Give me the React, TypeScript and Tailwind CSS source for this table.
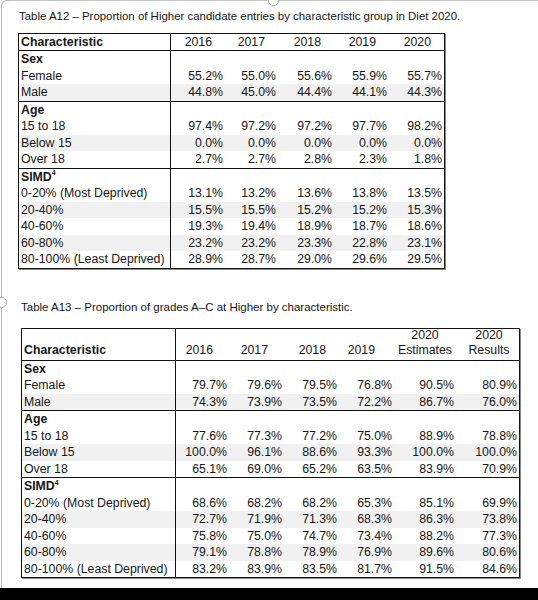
import React from 'react';

type Row = { label: string; values: string[]; head?: boolean; sup?: string };
type Section = Row[];

const font = "font-['Liberation_Sans',Arial,sans-serif]";

const a12: Section[] = [
  [
    { label: 'Sex', values: [], head: true },
    { label: 'Female', values: ['55.2%', '55.0%', '55.6%', '55.9%', '55.7%'] },
    { label: 'Male', values: ['44.8%', '45.0%', '44.4%', '44.1%', '44.3%'] },
  ],
  [
    { label: 'Age', values: [], head: true },
    { label: '15 to 18', values: ['97.4%', '97.2%', '97.2%', '97.7%', '98.2%'] },
    { label: 'Below 15', values: ['0.0%', '0.0%', '0.0%', '0.0%', '0.0%'] },
    { label: 'Over 18', values: ['2.7%', '2.7%', '2.8%', '2.3%', '1.8%'] },
  ],
  [
    { label: 'SIMD', values: [], head: true, sup: '4' },
    { label: '0-20% (Most Deprived)', values: ['13.1%', '13.2%', '13.6%', '13.8%', '13.5%'] },
    { label: '20-40%', values: ['15.5%', '15.5%', '15.2%', '15.2%', '15.3%'] },
    { label: '40-60%', values: ['19.3%', '19.4%', '18.9%', '18.7%', '18.6%'] },
    { label: '60-80%', values: ['23.2%', '23.2%', '23.3%', '22.8%', '23.1%'] },
    { label: '80-100% (Least Deprived)', values: ['28.9%', '28.7%', '29.0%', '29.6%', '29.5%'] },
  ],
];

const a13: Section[] = [
  [
    { label: 'Sex', values: [], head: true },
    { label: 'Female', values: ['79.7%', '79.6%', '79.5%', '76.8%', '90.5%', '80.9%'] },
    { label: 'Male', values: ['74.3%', '73.9%', '73.5%', '72.2%', '86.7%', '76.0%'] },
  ],
  [
    { label: 'Age', values: [], head: true },
    { label: '15 to 18', values: ['77.6%', '77.3%', '77.2%', '75.0%', '88.9%', '78.8%'] },
    { label: 'Below 15', values: ['100.0%', '96.1%', '88.6%', '93.3%', '100.0%', '100.0%'] },
    { label: 'Over 18', values: ['65.1%', '69.0%', '65.2%', '63.5%', '83.9%', '70.9%'] },
  ],
  [
    { label: 'SIMD', values: [], head: true, sup: '4' },
    { label: '0-20% (Most Deprived)', values: ['68.6%', '68.2%', '68.2%', '65.3%', '85.1%', '69.9%'] },
    { label: '20-40%', values: ['72.7%', '71.9%', '71.3%', '68.3%', '86.3%', '73.8%'] },
    { label: '40-60%', values: ['75.8%', '75.0%', '74.7%', '73.4%', '88.2%', '77.3%'] },
    { label: '60-80%', values: ['79.1%', '78.8%', '78.9%', '76.9%', '89.6%', '80.6%'] },
    { label: '80-100% (Least Deprived)', values: ['83.2%', '83.9%', '83.5%', '81.7%', '91.5%', '84.6%'] },
  ],
];

// 各セクションの行（見出し行 + 交互の薄いグレー）
const Body: React.FC<{ sections: Section[]; cols: string; n: number }> = ({ sections, cols, n }) => (
  <>
    {sections.map((sec, si) => (
      <div key={si} className={si < sections.length - 1 ? 'border-b border-[#111]' : ''}>
        {sec.map((r, ri) => (
          <div key={ri} className={`grid ${cols} h-[16.5px] ${ri % 2 === 0 && ri > 0 ? 'bg-[#f1f1f1]' : ''}`}>
            <div className={`flex items-center border-r border-[#111] pl-[2px] ${r.head ? 'font-bold' : ''}`}>
              {r.label}
              {r.sup && <sup className="text-[7px] font-bold">{r.sup}</sup>}
            </div>
            {Array.from({ length: n }).map((_, i) => (
              <div key={i} className="flex items-center justify-end pr-[2px]">
                {r.values[i] ?? ''}
              </div>
            ))}
          </div>
        ))}
      </div>
    ))}
  </>
);

const T1 = 'grid-cols-[152px_54px_53px_56px_55px_55px]';
const T2 = 'grid-cols-[154px_53px_55px_55px_55px_62px_63px]';

export default function App() {
  return (
    <div className={`relative flex h-[600px] w-[538px] flex-col bg-white text-[#161616] ${font}`}>
      {/* page edge */}
      <div className="absolute left-[5px] right-0 top-0 h-px bg-[#c4c4c4]" />
      <div className="absolute left-[1px] top-[5px] bottom-[12px] w-px bg-[#b8b8b8]" />
      <div className="absolute left-[1px] top-0 h-[8px] w-[8px] rounded-tl-[6px] border-l border-t border-[#b8b8b8]" />
      <div className="absolute left-[268px] -top-[5px] h-[11px] w-[11px] rounded-full border border-[#b0b0b0] bg-white" />
      <div className="absolute -left-[4px] top-[297px] h-[11px] w-[11px] rounded-full border border-[#b0b0b0] bg-white" />

      <div className="flex-1">
        <div className="ml-[19px] mt-[9px] h-[14px] text-[11.45px] leading-[14px]">
          Table A12 – Proportion of Higher candidate entries by characteristic group in Diet 2020.
        </div>
        <div className="ml-[18px] mt-[10px] w-[427px] border border-[#111] text-[12.3px] leading-none shadow-[1px_1px_0_#8a8a8a]">
          <div className={`grid ${T1} h-[17px] border-b border-[#111]`}>
            <div className="flex items-center border-r border-[#111] pl-[2px] font-bold">Characteristic</div>
            {['2016', '2017', '2018', '2019', '2020'].map((y) => (
              <div key={y} className="flex items-center justify-end pr-[13px]">
                {y}
              </div>
            ))}
          </div>
          <Body sections={a12} cols={T1} n={5} />
        </div>

        <div className="ml-[21px] mt-[31px] h-[14px] text-[11.5px] leading-[14px]">
          Table A13 – Proportion of grades A–C at Higher by characteristic.
        </div>
        <div className="ml-[21px] mt-[14px] w-[499px] border border-[#111] text-[12.3px] leading-none shadow-[1px_1px_0_#8a8a8a]">
          <div className={`grid ${T2} h-[32px] border-b border-[#111]`}>
            <div className="flex items-end border-r border-[#111] pb-[3px] pl-[2px] font-bold">Characteristic</div>
            <div className="flex items-end justify-end pb-[3px] pr-[16px]">2016</div>
            <div className="flex items-end justify-end pb-[3px] pr-[16px]">2017</div>
            <div className="flex items-end justify-end pb-[3px] pr-[13px]">2018</div>
            <div className="flex items-end justify-end pb-[3px] pr-[19px]">2019</div>
            <div className="flex flex-col items-center justify-end gap-[3px] pb-[3px]">
              <span>2020</span>
              <span>Estimates</span>
            </div>
            <div className="flex flex-col items-center justify-end gap-[3px] pb-[3px] pl-[3px]">
              <span>2020</span>
              <span>Results</span>
            </div>
          </div>
          <Body sections={a13} cols={T2} n={6} />
        </div>
      </div>
      <div className="h-[12px] bg-black" />
    </div>
  );
}
